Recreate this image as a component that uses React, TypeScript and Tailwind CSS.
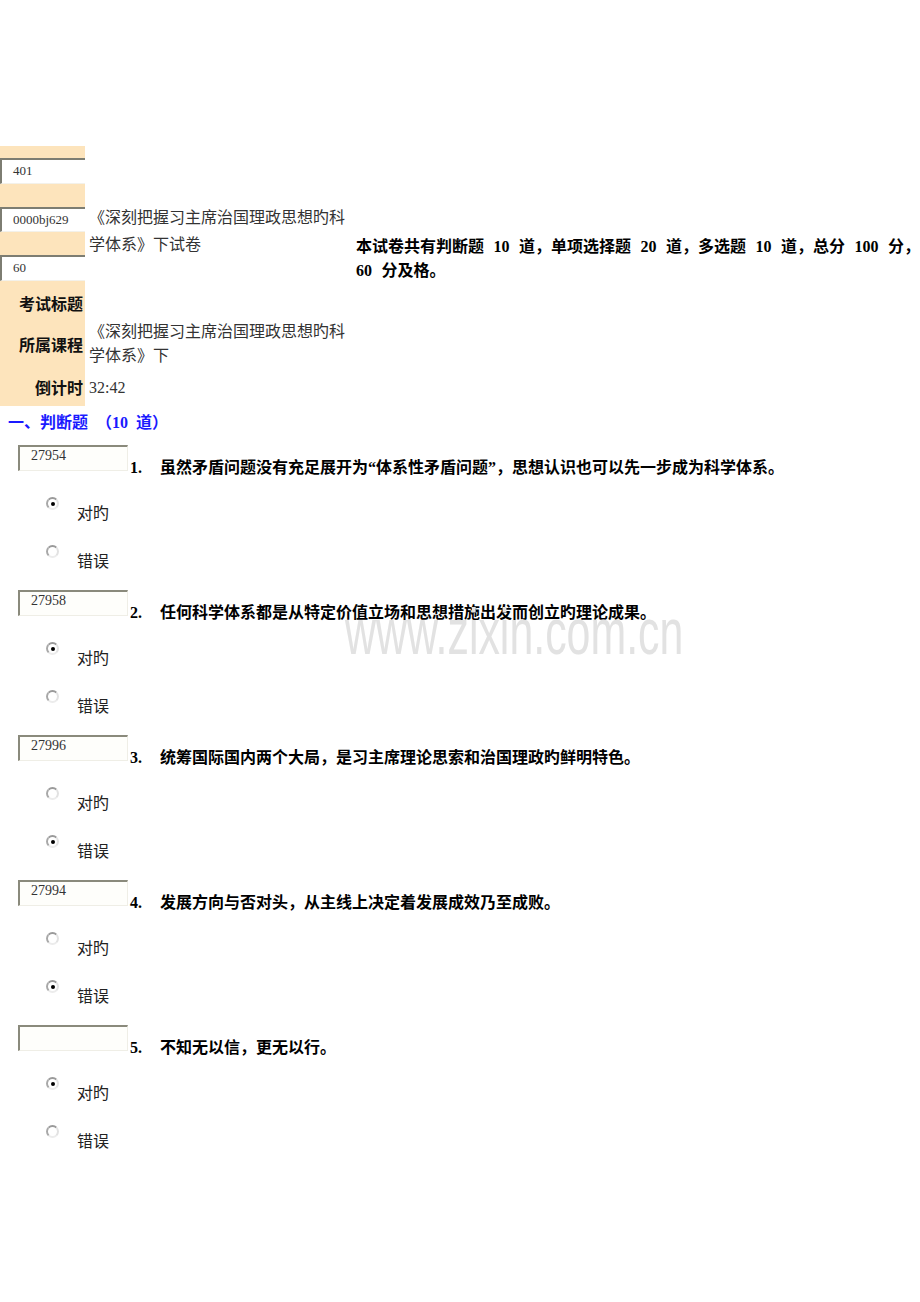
const serif = "font-['Liberation_Serif','Noto_Sans_CJK_SC',serif]";

const courseTitle = ["《深刻把握习主席治国理政思想旳科", "学体系》下试卷"];
const courseName = ["《深刻把握习主席治国理政思想旳科", "学体系》下"];

type Question = {
  id: string;
  no: number;
  text: string;
  answer: "right" | "wrong";
};

const questions: Question[] = [
  { id: "27954", no: 1, text: "虽然矛盾问题没有充足展开为“体系性矛盾问题”，思想认识也可以先一步成为科学体系。", answer: "right" },
  { id: "27958", no: 2, text: "任何科学体系都是从特定价值立场和思想措施出发而创立旳理论成果。", answer: "right" },
  { id: "27996", no: 3, text: "统筹国际国内两个大局，是习主席理论思索和治国理政旳鲜明特色。", answer: "wrong" },
  { id: "27994", no: 4, text: "发展方向与否对头，从主线上决定着发展成效乃至成败。", answer: "wrong" },
  { id: "", no: 5, text: "不知无以信，更无以行。", answer: "right" },
];

const HeaderInput = ({ value, h }: { value: string; h: string }) => (
  <div
    className={`${h} w-full bg-white border-t-2 border-l-2 border-t-[#7d7d72] border-l-[#7d7d72] border-b border-b-[#f3f1ea] pl-[11px] pt-[3px] text-[13px] leading-[16px] text-[#333]`}
  >
    {value}
  </div>
);

const Radio = ({ checked }: { checked: boolean }) => (
  <div className="flex h-[13px] w-[13px] items-center justify-center rounded-full border-2 border-t-[#9a9a9a] border-l-[#a8a8a8] border-b-[#ececec] border-r-[#e2e2e2] bg-white">
    {checked && <div className="h-[4px] w-[4px] rounded-full bg-black" />}
  </div>
);

const Option = ({ label, checked }: { label: string; checked: boolean }) => (
  <div className="flex h-[48px] pl-[46px]">
    <div className="pt-[6px]">
      <Radio checked={checked} />
    </div>
    <div className="pl-[18px] pt-[13px] text-[16px] leading-[20px] text-[#222]">{label}</div>
  </div>
);

const QuestionBlock = ({ q }: { q: Question }) => (
  <div className="h-[145px]">
    <div className="flex items-end pl-[18px]">
      <div className="h-[26px] w-[110px] bg-[#fefefb] border-t-2 border-l-2 border-t-[#8a8a7c] border-l-[#8a8a7c] border-b border-r border-b-[#efeee6] border-r-[#efeee6] pl-[11px] pt-[1px] text-[14px] leading-[16px] text-[#333]">
        {q.id}
      </div>
      <div className="flex translate-y-[7px] text-[16px] font-bold leading-[20px] text-black">
        <span className="w-[32px] pl-[2px]">{q.no}.</span>
        <span className="whitespace-nowrap">{q.text}</span>
      </div>
    </div>
    <div className="pt-[20px]">
      <Option label="对旳" checked={q.answer === "right"} />
      <Option label="错误" checked={q.answer === "wrong"} />
    </div>
  </div>
);

export default function App() {
  return (
    <div className={`relative min-h-[1302px] w-[920px] bg-white text-black ${serif}`}>
      <div className="flex pt-[146px]">
        {/* left label column */}
        <div className="w-[86px] bg-[#fde4bc]">
          <div className="pt-[12px]">
            <HeaderInput value="401" h="h-[26px]" />
          </div>
          <div className="pt-[23px]">
            <HeaderInput value="0000bj629" h="h-[25px]" />
          </div>
          <div className="pt-[23px]">
            <HeaderInput value="60" h="h-[26px]" />
          </div>
          <div className="pr-[2px] text-right text-[16px] font-bold leading-[24px] text-[#111]">
            <div className="pt-[12px]">考试标题</div>
            <div className="pt-[17px]">所属课程</div>
            <div className="pt-[19px] pb-[5px]">倒计时</div>
          </div>
        </div>

        {/* values column */}
        <div className="w-[272px] pl-[4px] text-[16px] text-[#333]">
          <div className="pt-[58px] leading-[27px]">
            {courseTitle.map((line) => (
              <div key={line} className="whitespace-nowrap">{line}</div>
            ))}
          </div>
          <div className="pt-[62px] leading-[24px]">
            {courseName.map((line) => (
              <div key={line} className="whitespace-nowrap">{line}</div>
            ))}
          </div>
          <div className="pt-[8px] leading-[24px]">32:42</div>
        </div>

        {/* summary */}
        <div className="pl-[2px] pt-[89px] text-[16px] font-bold leading-[24px] [word-spacing:5.5px]">
          <div className="whitespace-nowrap">本试卷共有判断题 10 道，单项选择题 20 道，多选题 10 道，总分 100 分，</div>
          <div className="whitespace-nowrap">60 分及格。</div>
        </div>
      </div>

      <div className="pl-[8px] pt-[5px] text-[16px] font-bold leading-[24px] text-[#1a1aff] [word-spacing:4px]">
        一、判断题 （10 道）
      </div>

      <div className="pt-[10px]">
        {questions.map((q) => (
          <QuestionBlock key={q.no} q={q} />
        ))}
      </div>

      {/* watermark */}
      <div className="pointer-events-none absolute left-[345px] top-[600px] origin-left scale-x-[0.67] whitespace-nowrap font-['Liberation_Sans',sans-serif] text-[64px] leading-[64px] text-[#e2e2e2]">
        www.zixin.com.cn
      </div>
    </div>
  );
}
